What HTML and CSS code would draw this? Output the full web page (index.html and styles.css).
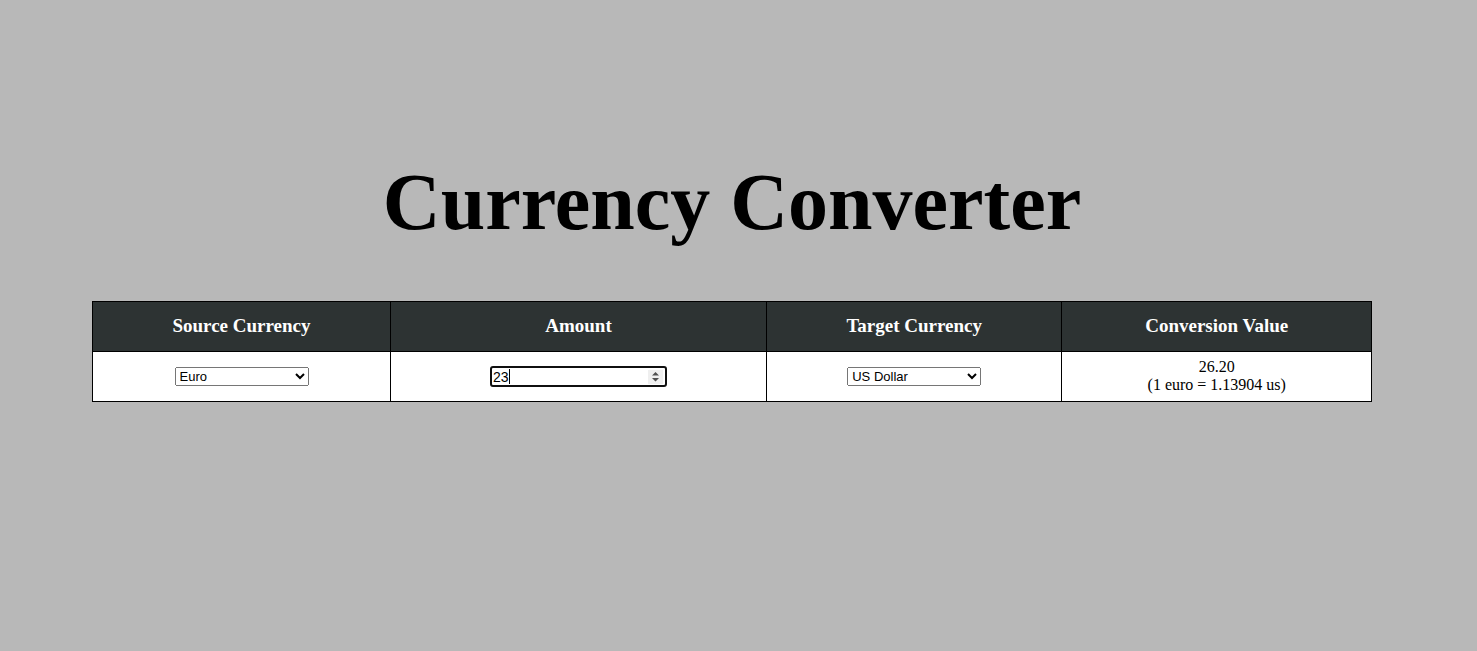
FILE: index.html
```html
<!DOCTYPE html>
<html lang="en">
<head>
<meta charset="utf-8">
<title>Currency Converter</title>
<link rel="stylesheet" href="styles.css">
</head>
<body>
<main class="converter">
  <h1 class="title">Currency Converter</h1>
  <table class="rates">
    <thead>
      <tr>
        <th class="col-source" id="source-label">Source Currency</th>
        <th class="col-amount" id="amount-label">Amount</th>
        <th class="col-target" id="target-label">Target Currency</th>
        <th>Conversion Value</th>
      </tr>
    </thead>
    <tbody>
      <tr>
        <td>
          <select class="field" aria-labelledby="source-label">
            <option selected>Euro</option>
            <option>US Dollar</option>
          </select>
        </td>
        <td>
          <div class="amount-box">
            <input class="field amount" type="number" value="23" aria-labelledby="amount-label" autofocus>
            <span class="caret" aria-hidden="true"></span>
            <svg class="spinner" viewBox="0 0 15 14" aria-hidden="true">
              <path d="M4 5.5 7.5 2 11 5.5ZM4 8 7.5 11.5 11 8Z" fill="#505050"/>
            </svg>
          </div>
        </td>
        <td>
          <select class="field" aria-labelledby="target-label">
            <option>Euro</option>
            <option selected>US Dollar</option>
          </select>
        </td>
        <td class="result">26.20<br>(1 euro = 1.13904 us)</td>
      </tr>
    </tbody>
  </table>
</main>
</body>
</html>
```
FILE: styles.css
```css
body {
  margin: 0;
  min-height: 100vh;
  background: #b8b8b8;
  color: #000;
  font-family: "Liberation Serif", "Times New Roman", serif;
}

.converter {
  padding: 157px 105px 0 92px;
}

.title {
  margin: 0 0 54px;
  font-size: 80px;
  line-height: 90px;
  text-align: center;
}

.rates {
  width: 100%;
  table-layout: fixed;
  border-collapse: collapse;
  background: #fff;
  font-size: 16px;
  line-height: 18px;
  text-align: center;
}

.rates th,
.rates td {
  box-sizing: border-box;
  height: 50px;
  padding: 0;
  border: 1px solid #000;
}

.rates th {
  padding-bottom: 2px;
  background: #2d3333;
  color: #fff;
  font-size: 19px;
}

.rates .result {
  padding-bottom: 2px;
}

.col-source {
  width: 23.3%;
}

.col-amount {
  width: 29.4%;
}

.col-target {
  width: 23.1%;
}

.field {
  box-sizing: border-box;
  width: 134px;
  height: 19px;
  font-family: "Liberation Sans", Arial, sans-serif;
  font-size: 13px;
}

.amount-box {
  position: relative;
  width: 177px;
  height: 21px;
  margin: 0 auto;
}

.amount {
  display: block;
  width: 100%;
  height: 100%;
  padding: 1px;
  border: 2px solid #101010;
  border-radius: 3px;
  outline: none;
  font-size: 14px;
  caret-color: transparent;
  appearance: textfield;
}

.caret {
  position: absolute;
  top: 3px;
  left: 19px;
  width: 1px;
  height: 15px;
  background: #000;
}

.spinner {
  position: absolute;
  top: 4px;
  right: 4px;
  width: 15px;
  height: 14px;
  background: #efefef;
}
```
